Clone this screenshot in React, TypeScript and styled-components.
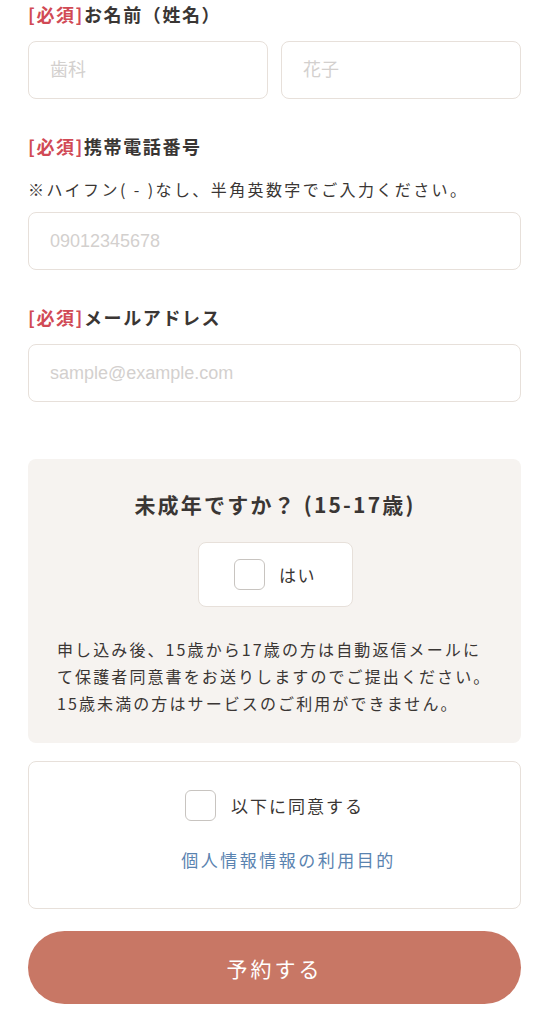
import React from 'react';
import styled, { createGlobalStyle } from 'styled-components';

const GlobalStyle = createGlobalStyle`
  html, body {
    margin: 0;
    padding: 0;
    background: #ffffff;
  }
  body {
    font-family: "Noto Sans CJK JP", "Noto Sans", sans-serif;
    color: #3a3634;
  }
  * {
    box-sizing: border-box;
  }
`;

const Form = styled.form`
  width: 546px;
  padding: 0 25px 0 28px;
  display: flex;
  flex-direction: column;
`;

const Field = styled.div`
  display: flex;
  flex-direction: column;
  margin-bottom: 33px;
`;

const Label = styled.div`
  font-size: 18px;
  font-weight: 700;
  line-height: 28px;
  letter-spacing: 1.6px;
  color: #3a3634;
  margin-bottom: 13px;
`;

const Required = styled.span`
  color: #d14a55;
`;

const Note = styled.p`
  margin: 4px 0 11px;
  font-size: 16px;
  line-height: 24px;
  letter-spacing: 2.4px;
  color: #3a3634;
`;

const InputRow = styled.div`
  display: grid;
  grid-template-columns: 1fr 1fr;
  gap: 13px;
`;

const TextInput = styled.input`
  width: 100%;
  height: 58px;
  border: 1.5px solid #e7e0da;
  border-radius: 8px;
  padding: 0 21px;
  font-family: "Liberation Sans", "Noto Sans CJK JP", sans-serif;
  font-size: 18px;
  color: #3a3634;
  background: #fff;
  outline: none;

  &::placeholder {
    color: #d3d0ce;
  }
`;

const MinorBox = styled.section`
  margin-top: 24px;
  background: #f6f3f0;
  border-radius: 8px;
  padding: 27px 28px 26px 29px;
  display: flex;
  flex-direction: column;
  align-items: center;
`;

const MinorTitle = styled.h3`
  margin: 0;
  font-size: 21px;
  font-weight: 700;
  line-height: 36px;
  letter-spacing: 2.2px;
  color: #3a3634;
`;

const YesButton = styled.label`
  margin-top: 20px;
  width: 155px;
  height: 65px;
  background: #fff;
  border: 1.5px solid #e7e0da;
  border-radius: 8px;
  display: flex;
  align-items: center;
  justify-content: center;
  gap: 14px;
  font-size: 17px;
  letter-spacing: 1.5px;
  color: #3a3634;
`;

const CheckBox = styled.span`
  width: 31px;
  height: 31px;
  border: 1.5px solid #c8c4c0;
  border-radius: 6px;
  background: #fff;
  flex-shrink: 0;
`;

const MinorText = styled.p`
  margin: 29px 0 0;
  align-self: stretch;
  font-size: 16px;
  line-height: 27px;
  letter-spacing: 2.1px;
  color: #3a3634;
`;

const AgreeBox = styled.section`
  margin-top: 18px;
  border: 1.5px solid #e7e0da;
  border-radius: 8px;
  height: 148px;
  display: flex;
  flex-direction: column;
  align-items: center;
  padding-top: 28px;
`;

const AgreeLabel = styled.label`
  display: flex;
  align-items: center;
  gap: 15px;
  font-size: 17px;
  letter-spacing: 2px;
  color: #3a3634;
`;

const PolicyLink = styled.a`
  margin-top: 26px;
  margin-left: 28px;
  font-size: 17px;
  letter-spacing: 2.5px;
  color: #5a83b0;
  text-decoration: none;
`;

const SubmitButton = styled.button`
  margin-top: 22px;
  height: 73px;
  width: 100%;
  border: none;
  border-radius: 37px;
  background: #c87765;
  color: #fff;
  font-family: "Noto Sans CJK JP", sans-serif;
  font-size: 21px;
  letter-spacing: 3px;
`;

const App: React.FC = () => {
  return (
    <>
      <GlobalStyle />
      <Form onSubmit={(e) => e.preventDefault()}>
        <Field>
          <Label>
            <Required>[必須]</Required>お名前（姓名）
          </Label>
          <InputRow>
            <TextInput placeholder="歯科" />
            <TextInput placeholder="花子" />
          </InputRow>
        </Field>

        <Field>
          <Label>
            <Required>[必須]</Required>携帯電話番号
          </Label>
          <Note>※ハイフン( - )なし、半角英数字でご入力ください。</Note>
          <TextInput placeholder="09012345678" />
        </Field>

        <Field>
          <Label>
            <Required>[必須]</Required>メールアドレス
          </Label>
          <TextInput placeholder="sample@example.com" />
        </Field>

        <MinorBox>
          <MinorTitle>未成年ですか？ (15-17歳)</MinorTitle>
          <YesButton>
            <CheckBox />
            はい
          </YesButton>
          <MinorText>
            申し込み後、15歳から17歳の方は自動返信メールにて保護者同意書をお送りしますのでご提出ください。15歳未満の方はサービスのご利用ができません。
          </MinorText>
        </MinorBox>

        <AgreeBox>
          <AgreeLabel>
            <CheckBox />
            以下に同意する
          </AgreeLabel>
          <PolicyLink href="#">個人情報情報の利用目的</PolicyLink>
        </AgreeBox>

        <SubmitButton type="submit">予約する</SubmitButton>
      </Form>
    </>
  );
};

export default App;
